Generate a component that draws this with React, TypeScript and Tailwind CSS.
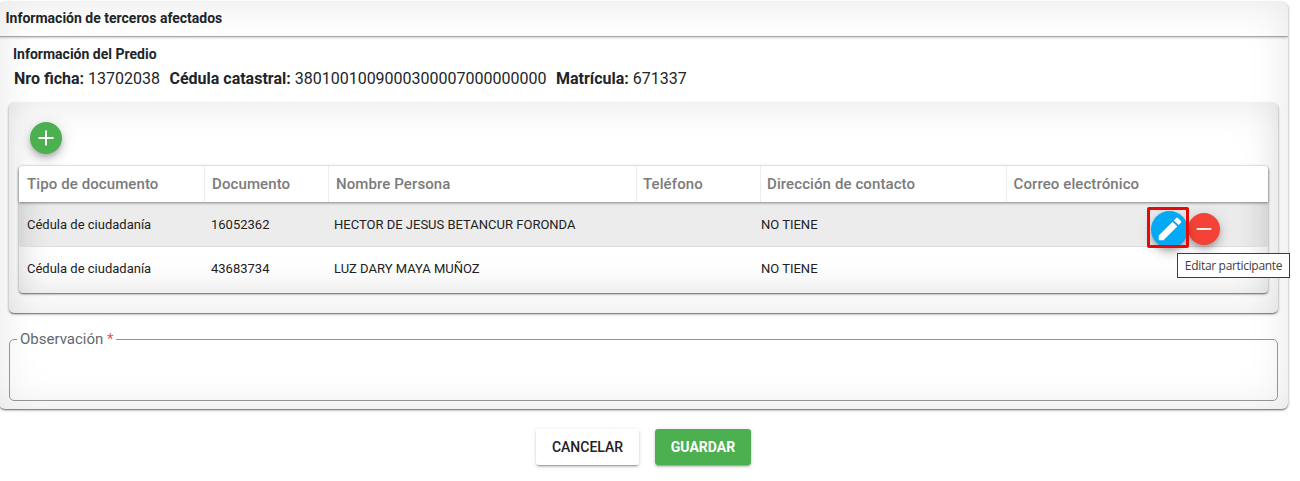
import React from 'react';

const columns = [
  { title: 'Tipo de documento', cls: 'w-[185px] pl-[8px]' },
  { title: 'Documento', cls: 'w-[124px] pl-[7px] border-l' },
  { title: 'Nombre Persona', cls: 'w-[308px] pl-[7px] border-l' },
  { title: 'Teléfono', cls: 'w-[124px] pl-[6px] border-l' },
  { title: 'Dirección de contacto', cls: 'w-[246px] pl-[6px] border-l' },
  { title: 'Correo electrónico', cls: 'flex-1 pl-[6.5px] border-l' },
];

const people = [
  { type: 'Cédula de ciudadanía', doc: '16052362', name: 'HECTOR DE JESUS BETANCUR FORONDA', address: 'NO TIENE' },
  { type: 'Cédula de ciudadanía', doc: '43683734', name: 'LUZ DARY MAYA MUÑOZ', address: 'NO TIENE' },
];

const fabShadow = 'shadow-[0_3px_5px_-1px_rgba(0,0,0,.2),0_6px_10px_rgba(0,0,0,.14),0_1px_18px_rgba(0,0,0,.12)]';
const cardShadow =
  'shadow-[0_2px_1px_-1px_rgba(0,0,0,.2),0_1px_1px_rgba(0,0,0,.14),0_1px_3px_rgba(0,0,0,.4),inset_0_0_40px_rgba(0,0,0,.1)]';

function Icon({ d, className }: { d: string; className: string }) {
  return (
    <svg viewBox="0 0 24 24" className={className} fill="#fff">
      <path d={d} />
    </svg>
  );
}

function Field({ label, value }: { label: string; value: string }) {
  return (
    <span>
      <span className="font-bold">{label}</span> {value}
    </span>
  );
}

function PeopleTable() {
  return (
    <div className={`ml-[10px] mt-[12px] h-[127px] w-[1249px] rounded-[4px] ${cardShadow}`}>
      <div className="relative flex h-[36px] rounded-t-[3px] bg-white text-[15px] font-medium leading-[36px] tracking-[0.1px] text-[#7b7b7b] shadow-[0_1px_3px_rgba(0,0,0,.45)]">
        {columns.map((c) => (
          <div key={c.title} className={`border-[#ececec] ${c.cls}`}>
            {c.title}
          </div>
        ))}
      </div>
      {people.map((p, i) => (
        <div
          key={p.doc}
          className={`flex h-[45px] text-[13px] text-[#212121] ${i === 0 ? 'border-b border-[#dcdcdc] bg-black/[.075] leading-[46px]' : 'leading-[44px]'}`}
        >
          <div className="w-[192px] pl-[8px]">{p.type}</div>
          <div className="w-[123px]">{p.doc}</div>
          <div className="w-[427px]">{p.name}</div>
          <div className="flex-1">{p.address}</div>
          {i === 0 && (
            <div className="relative flex w-[121px]">
              <div className="relative mt-[5px] flex h-[41px] w-[42px] items-center justify-center overflow-visible">
                <button className={`ml-[3px] mt-[3px] flex size-[37px] shrink-0 items-center justify-center rounded-full bg-[#03a9f4] ${fabShadow}`}>
                  <Icon className="size-[30px]" d="M3 17.25V21h3.75L17.81 9.94l-3.75-3.75L3 17.25zM20.71 7.04a1 1 0 0 0 0-1.41l-2.34-2.34a1 1 0 0 0-1.41 0l-1.83 1.83 3.75 3.75 1.83-1.83z" />
                </button>
                <span className="absolute inset-0 z-10 rounded-[2px] border-[3px] border-[#e60909]" />
              </div>
              <button className={`-ml-px mt-[11px] flex size-[32px] items-center justify-center rounded-full bg-[#f44336] ${fabShadow}`}>
                <Icon className="size-[22px]" d="M4 11h16v2H4z" />
              </button>
              <div className="absolute left-[30px] top-[51px] z-20 h-[25px] w-[113px] whitespace-nowrap border border-[#3c3c3c] bg-white text-center font-['Open_Sans',sans-serif] text-[12px] leading-[24px] tracking-[-0.32px] text-[#404040]">
                Editar participante
              </div>
            </div>
          )}
        </div>
      ))}
    </div>
  );
}

export default function App() {
  return (
    <div className="h-[481px] overflow-hidden bg-white font-[Roboto,sans-serif] text-[#212529]">
      <div className="pt-[2px]">
        <section className={`-ml-px h-[407px] w-[1289px] rounded-[6px] ${cardShadow}`}>
          <h1 className="h-[34px] pl-[6.5px] text-[14px] font-bold leading-[33px] shadow-[0_1px_1px_rgba(0,0,0,.2),0_1px_3px_rgba(0,0,0,.28)] [clip-path:inset(0_0_-5px_0)]">
            Información de terceros afectados
          </h1>
          <h2 className="ml-[14px] mt-[8px] text-[14px] font-bold leading-[20px]">Información del Predio</h2>
          <div className="ml-[15px] mt-[3px] flex h-[24px] gap-[9.5px] text-[16px] leading-[24px]">
            <Field label="Nro ficha:" value="13702038" />
            <Field label="Cédula catastral:" value="3801001009000300007000000000" />
            <Field label="Matrícula:" value="671337" />
          </div>
          <div className={`ml-[10px] mt-[12px] h-[210px] w-[1269px] rounded-[5px] pt-[19px] ${cardShadow}`}>
            <button className={`ml-[21px] flex size-[32px] items-center justify-center rounded-full bg-[#4caf50] ${fabShadow}`}>
              <Icon className="size-[24px]" d="M19.500 13H13v6.500h-2V13H4.500v-2H11V4.500h2V11h6.500z" />
            </button>
            <PeopleTable />
          </div>
          <fieldset className="ml-[10px] mt-[17px] h-[71px] w-[1269px] rounded-[5px] border border-[#90959a] pl-[7px]">
            <legend className="h-[18px] whitespace-nowrap pl-[3px] pr-[2px] text-[15px] leading-[18px] text-[#5f6870]">
              Observación <span className="text-[#e05a5a]">*</span>
            </legend>
          </fieldset>
        </section>
        <div className="ml-[536px] mt-[20px] flex gap-[16px] text-[14px] font-medium leading-[36px]">
          <button className="h-[36px] w-[103px] rounded-[3px] bg-white text-[#212121] shadow-[0_3px_1px_-2px_rgba(0,0,0,.2),0_2px_2px_rgba(0,0,0,.14),0_1px_5px_rgba(0,0,0,.12)]">
            CANCELAR
          </button>
          <button className="h-[36px] w-[96px] rounded-[3px] bg-[#4caf50] font-bold text-white shadow-[0_3px_1px_-2px_rgba(0,0,0,.2),0_2px_2px_rgba(0,0,0,.14),0_1px_5px_rgba(0,0,0,.12)]">
            GUARDAR
          </button>
        </div>
      </div>
    </div>
  );
}
